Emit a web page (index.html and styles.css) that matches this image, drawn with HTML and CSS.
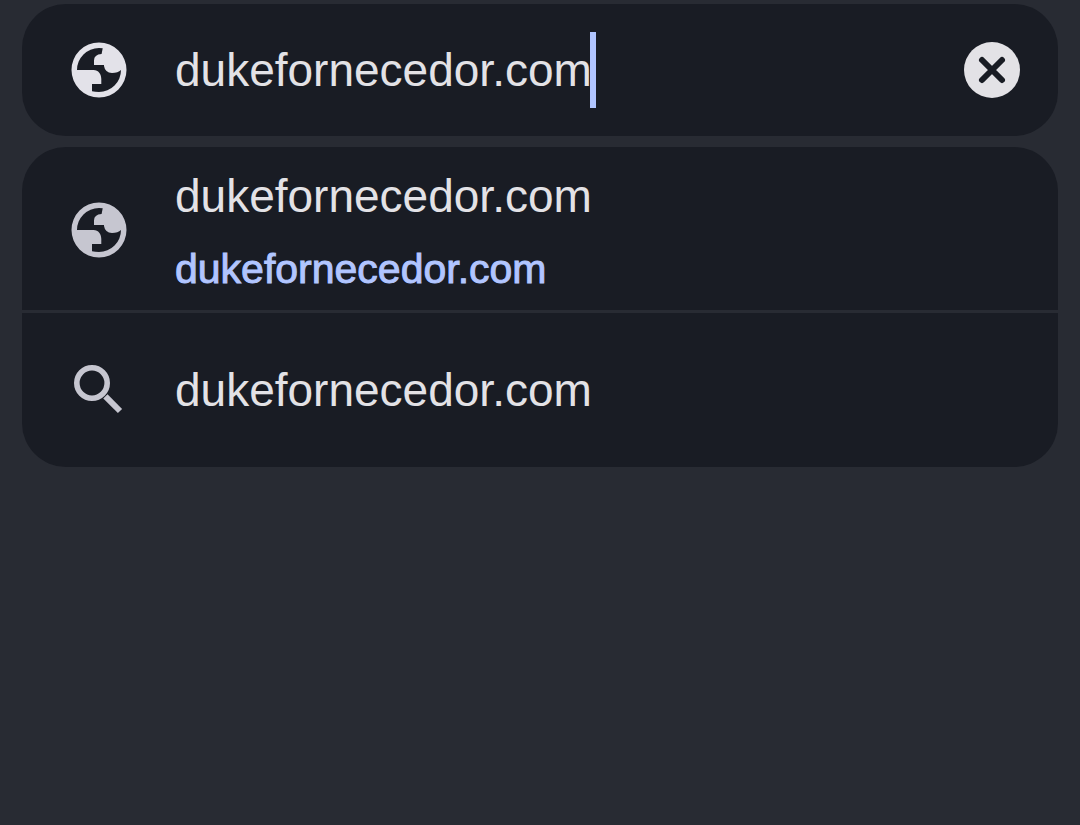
FILE: index.html
```
<!DOCTYPE html>
<html lang="pt">
	<head>
	<meta charset="utf-8">
	<meta name="viewport" content="width=device-width, initial-scale=1">
	<title>dukefornecedor.com</title>
	<link rel="stylesheet" href="styles.css">
	</head>

	<body>
		<svg class="sprite" aria-hidden="true">
			<symbol id="globe" viewBox="0 0 56 56">
				<path fill="currentColor" fill-rule="evenodd" d="M28 .5A27.5 27.5 0 1 1 28 55.5A27.5 27.5 0 1 1 28 .5ZM6 28A22 22 0 0 1 28 6Q30 6 31.7 6.3L30.6 12Q23 12.5 23 18.5V23H33V24Q34 30.5 41 31Q47 31 50 28A22 22 0 0 1 28 50Q24 50 21 49.2V42H30.3V37C30.3 32 27.5 28 22.5 28Z"/>
			</symbol>
			<symbol id="search" viewBox="0 0 56 56">
				<circle cx="21" cy="21" r="15.2" fill="none" stroke="currentColor" stroke-width="5.6"/>
				<path d="M34.4 34.4L49 49" fill="none" stroke="currentColor" stroke-width="6"/>
			</symbol>
		</svg>

		<form class="bar">
			<label for="url"><svg class="icon light"><title>Site</title><use href="#globe"/></svg></label>
			<div class="field">
				<input class="url" id="url" type="text" value="dukefornecedor.com" autocomplete="off" spellcheck="false">
				<span class="caret"></span>
			</div>
			<button class="clear" type="reset" aria-label="Limpar">
				<svg class="icon" viewBox="0 0 56 56"><path d="M18 18L38 38M38 18L18 38" fill="none" stroke="currentColor" stroke-width="6" stroke-linecap="round"/></svg>
			</button>
		</form>

		<div class="results">
			<a class="row site" href="#">
				<svg class="icon"><use href="#globe"/></svg>
				<div class="text">
					<div class="name">dukefornecedor.com</div>
					<div class="link">dukefornecedor.com</div>
				</div>
			</a>
			<a class="row query" href="#">
				<svg class="icon"><use href="#search"/></svg>
				<div class="name">dukefornecedor.com</div>
			</a>
		</div>
	</body>
</html>
```
FILE: styles.css
```
*{
box-sizing: border-box;
}
html, body{
min-height: 100%;
}
body{
margin: 0;
padding: 4px 22px;
background: #282b33;
color: #e3e2e6;
font-family: "Liberation Sans", Arial, sans-serif;
font-size: 46px;
}
.sprite{
display: none;
}
.icon{
display: block;
flex: none;
width: 56px;
height: 56px;
color: #c6c6d0;
}
.icon.light{
color: #e3e2e9;
}

/* address bar */
.bar{
display: flex;
align-items: center;
gap: 48px;
height: 132px;
margin: 0 0 11px;
padding: 0 38px 0 49px;
border-radius: 44px;
background: #191c24;
}
.field{
display: flex;
align-items: center;
flex: 1;
min-width: 0;
}
.url{
width: 415px;
min-width: 0;
height: 64px;
padding: 0;
border: 0;
outline: 0;
background: none;
color: inherit;
font: inherit;
caret-color: transparent;
}
.caret{
flex: none;
width: 6px;
height: 76px;
background: #b1c5ff;
}
.clear{
flex: none;
padding: 0;
border: 0;
border-radius: 50%;
background: #e3e2e6;
cursor: pointer;
}
.clear .icon{
color: #191c24;
}

/* suggestions */
.results{
overflow: hidden;
border-radius: 44px;
}
.row{
display: flex;
align-items: center;
gap: 48px;
padding: 17px 38px 15px 49px;
background: #191c24;
color: inherit;
text-decoration: none;
}
.row + .row{
margin-top: 3px;
}
.query{
min-height: 154px;
padding-top: 16px;
padding-bottom: 16px;
}
.name{
line-height: 64px;
}
.link{
margin-top: 15px;
color: #b1c5ff;
font-size: 41px;
line-height: 52px;
-webkit-text-stroke: 1px #b1c5ff;
}
```
